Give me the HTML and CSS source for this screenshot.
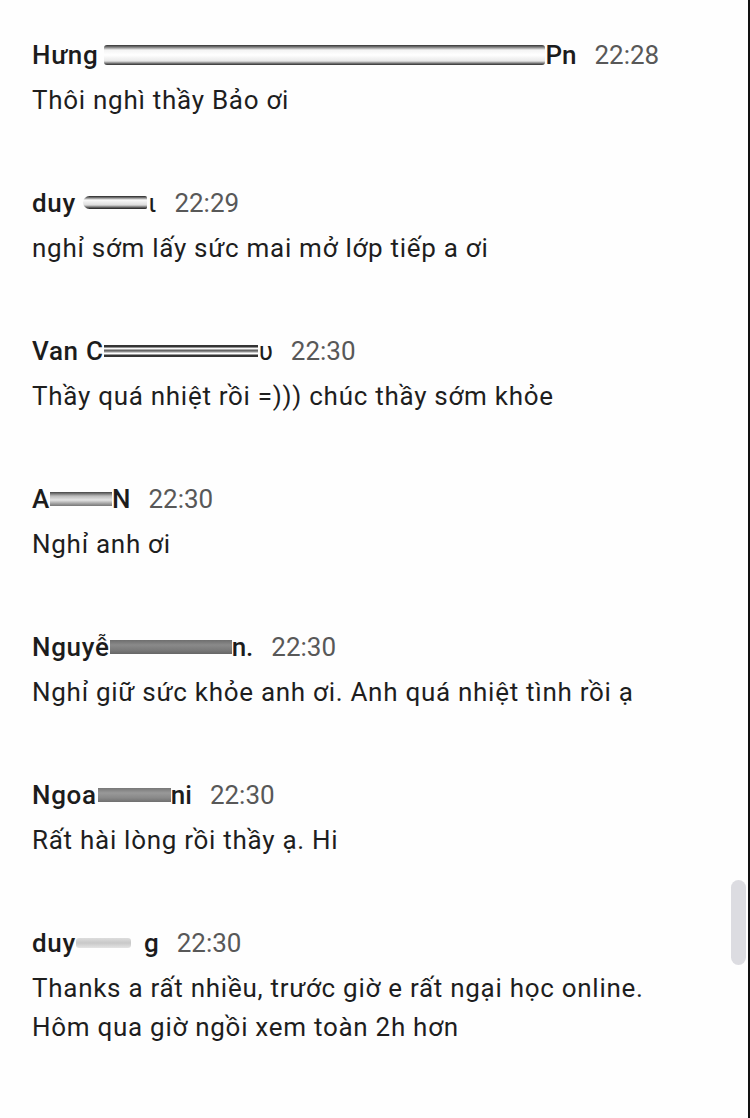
FILE: index.html
```html
<!DOCTYPE html>
<html lang="vi">
<head>
<meta charset="utf-8">
<title>Chat</title>
<link rel="stylesheet" href="styles.css">
</head>
<body>
<div class="screen">
  <div class="list">
    <div class="msg">
      <div class="head"><span class="name">Hưng</span><span class="bar bar-outline" style="width:441px"></span><span class="name tail">Pn</span><span class="time">22:28</span></div>
      <div class="text">Thôi nghì thầy Bảo ơi</div>
    </div>
    <div class="msg">
      <div class="head"><span class="name">duy</span><span class="bar bar-pill" style="width:64px"></span><span class="name tail thin">ι</span><span class="time">22:29</span></div>
      <div class="text">nghỉ sớm lấy sức mai mở lớp tiếp a ơi</div>
    </div>
    <div class="msg">
      <div class="head"><span class="name">Van C</span><span class="bar bar-lines" style="width:154px"></span><span class="name tail thin">υ</span><span class="time">22:30</span></div>
      <div class="text">Thầy quá nhiệt rồi =))) chúc thầy sớm khỏe</div>
    </div>
    <div class="msg">
      <div class="head"><span class="name">A</span><span class="bar bar-grey" style="width:62px"></span><span class="name tail">N</span><span class="time">22:30</span></div>
      <div class="text">Nghỉ anh ơi</div>
    </div>
    <div class="msg">
      <div class="head"><span class="name">Nguyễ</span><span class="bar bar-dark" style="width:122px"></span><span class="name tail">n.</span><span class="time">22:30</span></div>
      <div class="text">Nghỉ giữ sức khỏe anh ơi. Anh quá nhiệt tình rồi ạ</div>
    </div>
    <div class="msg">
      <div class="head"><span class="name">Ngoa</span><span class="bar bar-grey2" style="width:73px"></span><span class="name tail">ni</span><span class="time">22:30</span></div>
      <div class="text">Rất hài lòng rồi thầy ạ. Hi</div>
    </div>
    <div class="msg">
      <div class="head"><span class="name">duy</span><span class="bar bar-light" style="width:55px"></span><span class="name tail gap">g</span><span class="time">22:30</span></div>
      <div class="text">Thanks a rất nhiều, trước giờ e rất ngại học online.<br>Hôm qua giờ ngồi xem toàn 2h hơn</div>
    </div>
  </div>
  <div class="scrollbar"></div>
</div>
</body>
</html>
```

FILE: styles.css
```css
html, body {
  margin: 0;
  padding: 0;
  background: #ffffff;
}
.screen {
  position: relative;
  width: 748px;
  height: 1118px;
  border-right: 2px solid #111;
  background: #fefefe;
  overflow: hidden;
  font-family: Roboto, "Noto Sans", "Liberation Sans", sans-serif;
}
.list {
  display: flex;
  flex-direction: column;
  gap: 63px;
  padding: 35px 0 0 32px;
}
.msg {
  display: flex;
  flex-direction: column;
  gap: 7px;
}
.head {
  display: flex;
  align-items: center;
  height: 39px;
  font-size: 26px;
  white-space: nowrap;
}
.name {
  font-weight: 500;
  color: #1c1c1c;
  letter-spacing: 0.7px;
}
.tail {
  letter-spacing: 0;
}
.tail.thin {
  font-weight: 400;
  margin-left: 1px;
}
.tail.gap {
  margin-left: 13px;
}
.time {
  color: #585858;
  margin-left: 18px;
  font-weight: 400;
  letter-spacing: 0;
}
.text {
  font-size: 26px;
  line-height: 39px;
  color: #1e1e1e;
  letter-spacing: 0.72px;
}
.bar {
  display: inline-block;
  flex: none;
  height: 16px;
  margin-left: 7px;
}
.bar-outline {
  height: 20px;
  margin-left: 6px;
  background: linear-gradient(#333 0, #777 2px, #f4f4f4 5px, #ffffff 10px, #e8e8e8 16px, #555 19px, #333 20px);
  border-radius: 3px;
}
.bar-pill {
  height: 13px;
  margin-left: 7px;
  border-radius: 7px 2px 2px 7px;
  background: linear-gradient(#222 0, #888 2px, #fafafa 4px, #ddd 9px, #444 12px, #222 13px);
}
.bar-lines {
  height: 12px;
  margin-left: 0;
  background: linear-gradient(#333 0, #333 2px, #f0f0f0 3px, #fff 4px, #555 5px, #999 7px, #fff 8px, #fff 9px, #333 10px, #333 12px);
}
.bar-grey {
  height: 14px;
  margin-left: 0;
  background: linear-gradient(#444 0, #bbb 4px, #e4e4e4 8px, #999 12px, #777 14px);
}
.bar-dark {
  height: 14px;
  margin-left: 0;
  background: linear-gradient(#6e6e6e 0, #8a8a8a 5px, #7a7a7a 10px, #666 14px);
}
.bar-grey2 {
  height: 14px;
  margin-left: 1px;
  background: linear-gradient(#777 0, #999 5px, #888 10px, #6f6f6f 14px);
}
.bar-light {
  height: 10px;
  margin-left: 0;
  background: linear-gradient(#ddd 0, #c8c8c8 5px, #e4e4e4 10px);
  border-radius: 3px;
}
.scrollbar {
  position: absolute;
  left: 731px;
  top: 880px;
  width: 15px;
  height: 85px;
  border-radius: 8px;
  background: #dcdce1;
}
```
